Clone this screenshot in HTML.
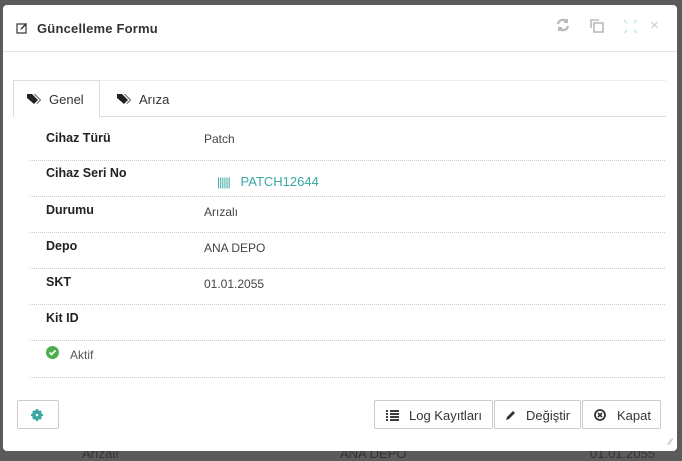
<!DOCTYPE html>
<html><head><meta charset="utf-8"><style>
*{box-sizing:border-box;margin:0;padding:0}
body{width:682px;height:457px;background:#5b5b5b;font-family:"Liberation Sans",sans-serif;position:relative;overflow:hidden;color:#333}
.bg{position:absolute;top:446px;font-size:13px;color:#333}
.modal{position:absolute;left:3px;top:5px;width:674px;height:446px;background:#fff;border-radius:4px}
.hd{position:absolute;left:0;top:0;width:100%;height:47px;border-bottom:1px solid #e5e5e5}
.title{position:absolute;left:34px;top:16px;font-size:13px;font-weight:bold;color:#333;letter-spacing:.2px}
.tabs{position:absolute;left:10px;top:75px;width:653px;height:37px;border-top:1px solid #eee;border-bottom:1px solid #ddd}
.tab{position:absolute;top:0;height:37px;font-size:13px;color:#333;padding-top:11px}
.t1{left:0;width:87px;border:1px solid #ddd;border-bottom:1px solid #fff;background:#fff;top:-1px;height:38px;padding-left:13px}
.t2{left:92px;padding-left:12px}
.row{position:absolute;left:27px;width:635px;border-bottom:1px dotted #ccc;font-size:12px}
.lab{position:absolute;left:16px;font-weight:bold;font-size:12.5px;color:#222}
.val{position:absolute;left:174px;color:#444}
.btn{position:absolute;top:395px;height:29px;border:1px solid #ccc;border-radius:2px;background:#fff;font-size:13px;color:#333;padding-top:7px}
</style></head><body>
<div class="bg" style="left:82px">Arızalı</div>
<div class="bg" style="left:340px">ANA DEPO</div>
<div class="bg" style="left:590px">01.01.2055</div>
<div class="modal">
<div class="hd">
<svg style="position:absolute;left:13px;top:17px" width="12" height="12" viewBox="0 0 12 12"><rect x="1" y="2" width="9" height="9" fill="none" stroke="#333" stroke-width="1.2"/><path d="M4 8l1-2 5-5 1 1-5 5z" fill="#333"/></svg>
<div class="title">Güncelleme Formu</div>
<svg style="position:absolute;left:552px;top:12px" width="16" height="16" viewBox="0 0 16 16" fill="none" stroke="#bbb" stroke-width="2.4"><path d="M3 7a5 5 0 0 1 9-2"/><path d="M13 9a5 5 0 0 1-9 2"/><path d="M12 2v3h-3M4 14v-3h3" stroke-width="2"/></svg>
<svg style="position:absolute;left:586px;top:13px" width="16" height="16" viewBox="0 0 16 16" fill="none" stroke="#bbb" stroke-width="1.6"><path d="M2 10V2h8"/><rect x="5" y="5" width="9" height="9"/></svg>
<svg style="position:absolute;left:619px;top:13px" width="17" height="17" viewBox="0 0 17 17" fill="none" stroke="#bfe6e4" stroke-width="1.4"><path d="M2 2l3 3M15 2l-3 3M2 15l3-3M15 15l-3-3"/></svg>
<div style="position:absolute;left:647px;top:12px;font-size:15px;color:#c8c8c8">×</div>
</div>
<div class="tabs">
<div class="tab t1"><svg width="14" height="12" viewBox="0 0 14 12" style="vertical-align:-1px;margin-right:8px"><path d="M0 1h5l6 6-4 4-7-6z" fill="#222"/><path d="M7 1h1l6 6-4 4-0.5-.5 3.5-3.5z" fill="#222"/></svg>Genel</div>
<div class="tab t2"><svg width="14" height="12" viewBox="0 0 14 12" style="vertical-align:-1px;margin-right:8px"><path d="M0 1h5l6 6-4 4-7-6z" fill="#222"/><path d="M7 1h1l6 6-4 4-0.5-.5 3.5-3.5z" fill="#222"/></svg>Arıza</div>
</div>
<div class="row" style="top:112px;height:44px"><div class="lab" style="top:14px">Cihaz Türü</div><div class="val" style="top:15px">Patch</div></div>
<div class="row" style="top:156px;height:36px"><div class="lab" style="top:5px">Cihaz Seri No</div><div class="val" style="top:13px;left:187px;color:#3aa7a3;font-size:13px"><span style="letter-spacing:-1px;font-size:12px">||||||</span>&nbsp;&nbsp; PATCH12644</div></div>
<div class="row" style="top:192px;height:36px"><div class="lab" style="top:6px">Durumu</div><div class="val" style="top:8px">Arızalı</div></div>
<div class="row" style="top:228px;height:36px"><div class="lab" style="top:6px">Depo</div><div class="val" style="top:8px">ANA DEPO</div></div>
<div class="row" style="top:264px;height:36px"><div class="lab" style="top:6px">SKT</div><div class="val" style="top:8px">01.01.2055</div></div>
<div class="row" style="top:300px;height:36px"><div class="lab" style="top:6px">Kit ID</div></div>
<div class="row" style="top:336px;height:37px"><svg style="position:absolute;left:16px;top:5px" width="13" height="13" viewBox="0 0 13 13"><circle cx="6.5" cy="6.5" r="6.5" fill="#4cae4c"/><path d="M3.5 6.5l2 2 4-4" stroke="#fff" stroke-width="1.8" fill="none"/></svg><div style="position:absolute;left:40px;top:7px;color:#555">Aktif</div></div>
<div class="btn" style="left:14px;width:42px"><svg style="position:absolute;left:13px;top:8px" width="12" height="12" viewBox="0 0 12 12"><circle cx="6" cy="6" r="3.5" fill="none" stroke="#3aa7a3" stroke-width="3"/><path d="M6 0v12M0 6h12M2 2l8 8M10 2l-8 8" stroke="#3aa7a3" stroke-width="2"/><circle cx="6" cy="6" r="1.3" fill="#fff"/></svg></div>
<div class="btn" style="left:371px;width:119px;padding-left:11px"><svg width="13" height="11" viewBox="0 0 13 11" style="vertical-align:-1px;margin-right:10px"><path d="M0 1h2M4 1h9M0 4h2M4 4h9M0 7h2M4 7h9M0 10h2M4 10h9" stroke="#222" stroke-width="1.7"/></svg>Log Kayıtları</div>
<div class="btn" style="left:491px;width:87px;padding-left:10px"><svg width="12" height="12" viewBox="0 0 12 12" style="vertical-align:-1px;margin-right:9px"><path d="M1 11l1-3 6-6 2 2-6 6z" fill="#333"/></svg>Değiştir</div>
<div class="btn" style="left:579px;width:79px;padding-left:11px"><svg width="12" height="12" viewBox="0 0 12 12" style="vertical-align:-1px;margin-right:11px"><circle cx="6" cy="6" r="5" fill="none" stroke="#333" stroke-width="1.8"/><path d="M4 4l4 4M8 4l-4 4" stroke="#333" stroke-width="1.6"/></svg>Kapat</div>
<div style="position:absolute;right:5px;bottom:4px;font-size:9px;color:#aaa">⁄⁄</div>
</div>
</body></html>
